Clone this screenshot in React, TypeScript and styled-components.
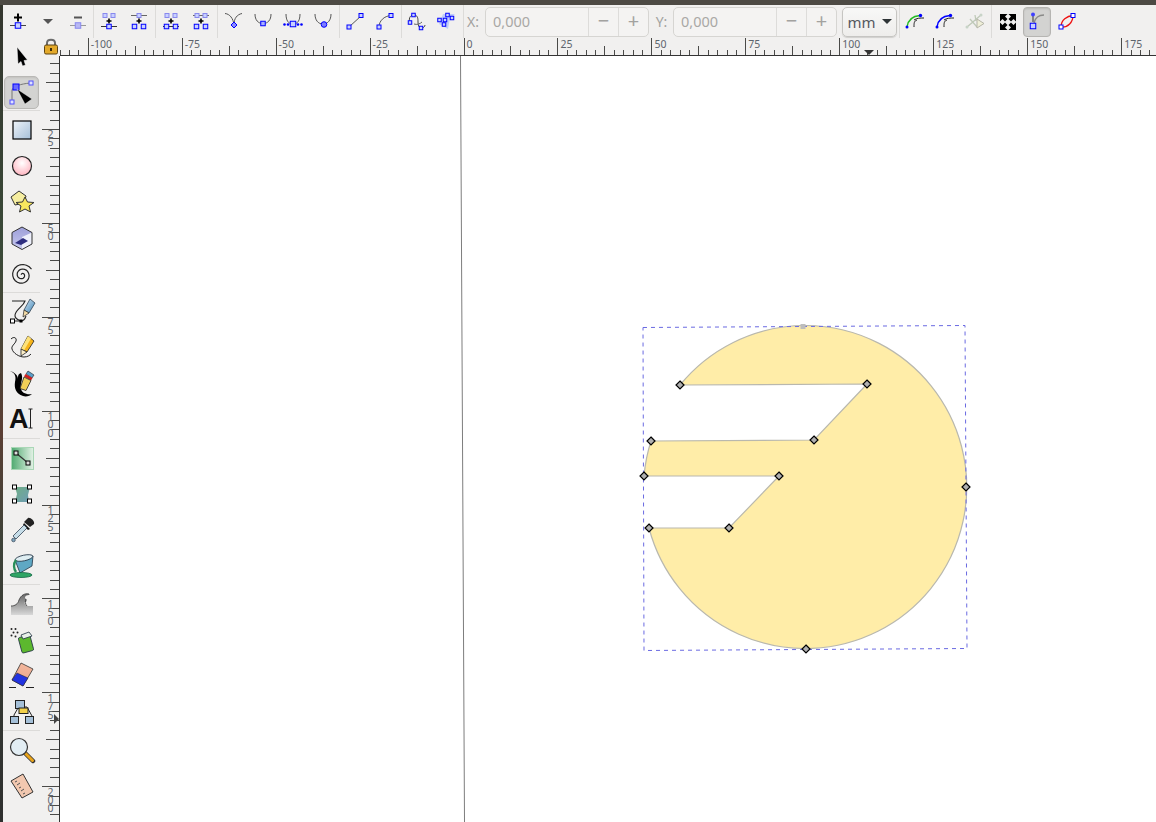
import React from "react";
import styled, { createGlobalStyle } from "styled-components";

const Global = createGlobalStyle`
  html, body { margin: 0; padding: 0; height: 100%; overflow: hidden; background: #f0efee; }
  #root { height: 100%; }
  * { box-sizing: border-box; }
`;

const Page = styled.div`
  width: 1156px;
  height: 822px;
  display: flex;
  flex-direction: column;
  font-family: "Noto Sans", "Open Sans", sans-serif;
  background: #f1f0ef;
  overflow: hidden;
`;
const TitleStrip = styled.div`
  height: 5px;
  flex: none;
  background: #4d4a44;
`;
const Body = styled.div`
  flex: 1;
  display: flex;
  min-height: 0;
`;
const DesktopEdge = styled.div`
  width: 3px;
  flex: none;
  background: linear-gradient(180deg, #34362e 0%, #3a4a38 30%, #5b3f34 52%, #3d4238 66%, #2e2f2e 100%);
`;
const Main = styled.div`
  flex: 1;
  display: flex;
  flex-direction: column;
  min-width: 0;
`;
const TopBar = styled.div`
  height: 33px;
  flex: none;
  display: flex;
  align-items: stretch;
`;
const Group = styled.div<{ $line?: boolean; $pl?: number; $pr?: number }>`
  display: flex;
  align-items: center;
  height: 33px;
  padding-left: ${(p) => p.$pl ?? 0}px;
  padding-right: ${(p) => p.$pr ?? 0}px;
  border-right: ${(p) => (p.$line ? "1px solid #dcdbd9" : "none")};
`;
const TopButton = styled.div<{ $active?: boolean; $w?: number }>`
  width: ${(p) => p.$w ?? 30}px;
  height: 30px;
  display: flex;
  align-items: center;
  justify-content: center;
  border-radius: 4px;
  ${(p) =>
    p.$active &&
    `background: #d3d3d1; border: 1px solid #b6b5b2; box-shadow: inset 0 1px 2px #bdbcb9; margin: 0 2px 0 0; flex: 0 0 28px;`}
`;
const FieldLabel = styled.span<{ $w: number }>`
  width: ${(p) => p.$w}px;
  font-size: 14px;
  color: #a3a29f;
  padding-left: 3px;
`;
const Spin = styled.div`
  width: 164px;
  height: 30px;
  display: flex;
  background: #f4f3f2;
  border: 1px solid #d6d5d2;
  border-radius: 5px;
`;
const SpinValue = styled.div`
  width: 102px;
  padding-left: 7px;
  font-size: 14.5px;
  line-height: 27px;
  color: #a9a8a5;
`;
const SpinStep = styled.div`
  width: 30px;
  border-left: 1px solid #dddcda;
  text-align: center;
  font-size: 20px;
  line-height: 25px;
  color: #a3a29f;
`;
const Unit = styled.div`
  width: 55px;
  height: 30px;
  margin-left: 5px;
  margin-right: 2px;
  display: flex;
  align-items: center;
  justify-content: center;
  gap: 6px;
  font-size: 15px;
  color: #56595e;
  border: 1px solid #c6c5c2;
  border-radius: 5px;
  background: linear-gradient(#f8f8f7, #eeedeb);
  box-shadow: 0 1px 1px #d0cfcc;
`;
const Caret = styled.span`
  width: 0;
  height: 0;
  border-left: 5px solid transparent;
  border-right: 5px solid transparent;
  border-top: 5px solid #2e3436;
`;
const Work = styled.div`
  flex: 1;
  display: flex;
  min-height: 0;
`;
const ToolColumn = styled.div`
  width: 37px;
  flex: none;
  display: flex;
  flex-direction: column;
  padding-top: 1px;
`;
const ToolButton = styled.div<{ $active?: boolean }>`
  width: 35px;
  height: ${(p) => (p.$active ? 33 : 36)}px;
  margin: ${(p) => (p.$active ? "1px 0 1px 1px" : "0 0 0 1px")};
  flex: none;
  display: flex;
  align-items: center;
  justify-content: center;
  border-radius: 5px;
  ${(p) =>
    p.$active &&
    `background: #d3d3d1; border: 1px solid #b9b8b5; box-shadow: inset 0 1px 2px #c2c1be;`}
`;
const ToolRule = styled.div`
  width: 37px;
  height: 1px;
  flex: none;
  margin-bottom: 1px;
  background: #dcdbd9;
`;
const Stage = styled.div`
  flex: 1;
  display: grid;
  grid-template-columns: 20px 1fr;
  grid-template-rows: 18px 1fr;
  min-width: 0;
`;
const Corner = styled.div`
  display: flex;
  justify-content: center;
  align-items: center;
  padding-left: 1px;
  padding-bottom: 1px;
`;
const RulerSvg = styled.svg`
  display: block;
`;
const Canvas = styled.div`
  background: #fff;
  overflow: hidden;
`;

const LONG = "#4a4a48";
const hTicks: React.ReactElement[] = [];
for (let k = -43; k <= 74; k++) {
  const x = Math.round(463.5 + k * 9.395) + 0.5;
  if (x < 60) continue;
  const kind = ((k % 10) + 10) % 10;
  const y1 = kind === 0 ? 38 : kind === 5 ? 46 : 50;
  hTicks.push(<line key={k} x1={x} x2={x} y1={y1} y2={55} stroke={LONG} />);
}
const hLabels = [-100, -75, -50, -25, 0, 25, 50, 75, 100, 125, 150, 175];

const vTicks: React.ReactElement[] = [];
for (let k = 3; k <= 83; k++) {
  const y = Math.round(35 + k * 9.39) + 0.5;
  const kind = k % 10;
  const x1 = kind === 0 ? 42 : kind === 5 ? 46 : 50;
  vTicks.push(<line key={k} x1={x1} x2={59} y1={y} y2={y} stroke={LONG} />);
}
const vLabels = ["25", "50", "75", "100", "125", "150", "175", "200"];

const HRuler = () => (
  <RulerSvg width={1096} height={18} viewBox="60 38 1096 18">
    {hTicks}
    <line x1={59} x2={1156} y1={55.5} y2={55.5} stroke="#333" />
    {hLabels.map((v, i) => (
      <text
        key={v}
        x={463.5 + (i - 4) * 93.95 + 3}
        y={48}
        fontSize={10.5}
        fontFamily="Noto Sans, sans-serif"
        fill="#5d646c"
      >
        {v}
      </text>
    ))}
    <polygon points="864,50 874,50 869,55" fill="#333" />
  </RulerSvg>
);

const VRuler = () => (
  <RulerSvg width={20} height={766} viewBox="40 56 20 766">
    {vTicks}
    <line x1={59.5} x2={59.5} y1={56} y2={822} stroke="#333" />
    {vLabels.map((v, i) => (
      <text key={v} fontSize={10.5} fontFamily="Noto Sans, sans-serif" fill="#5d646c">
        {v.split("").map((d, j) => (
          <tspan key={j} x={47.5} y={129 + i * 93.95 + 9 + j * 8.4}>
            {d}
          </tspan>
        ))}
      </text>
    ))}
    <polygon points="54,714 59,719 54,724" fill="#444" />
  </RulerSvg>
);

const BLUE = "#0000ff";

const Sq = ({ x, y, s = 5, f = "#c8d0ff", c = BLUE }: { x: number; y: number; s?: number; f?: string; c?: string }) => (
  <rect x={x - s / 2} y={y - s / 2} width={s} height={s} fill={f} stroke={c} strokeWidth={1} />
);
const Plus = ({ x, y, r = 2.5 }: { x: number; y: number; r?: number }) => (
  <path d={`M${x - r} ${y}H${x + r}M${x} ${y - r}V${y + r}`} stroke="#000" strokeWidth={1.6} fill="none" />
);

const Ico = ({ children, size = 26 }: { children: React.ReactNode; size?: number }) => (
  <svg width={size} height={size} viewBox={`0 0 ${size} ${size}`} style={{ overflow: "visible" }}>
    {children}
  </svg>
);

const NodeAdd = () => (
  <Ico>
    <path d="M13 4.500v8M9 8.500h8" stroke="#000" strokeWidth={2} />
    <path d="M5 16.500h16" stroke="#444" />
    <Sq x={13} y={16.5} s={5.500} />
  </Ico>
);
const Dropdown = () => (
  <svg width={12} height={8} viewBox="0 0 12 8">
    <polygon points="1,1 11,1 6,6" fill="#555" />
  </svg>
);
const NodeDel = () => (
  <Ico>
    <path d="M9 8.500h8" stroke="#555" strokeWidth={2} />
    <path d="M5 16.500h16" stroke="#999" />
    <Sq x={13} y={16.5} s={5.500} c="#8888ee" f="#b8b8f4" />
  </Ico>
);
const JoinA = () => (
  <Ico>
    <Sq x={9} y={6.5} s={4} c="#8888ee" />
    <Sq x={17} y={6.5} s={4} c="#8888ee" />
    <Plus x={13} y={12} />
    <path d="M5 17.500h16" stroke="#333" />
    <Sq x={13} y={17.5} s={4.500} />
  </Ico>
);
const JoinB = () => (
  <Ico>
    <path d="M5 6.500h16" stroke="#666" />
    <Sq x={13} y={6.5} s={4} c="#8888ee" />
    <Plus x={13} y={12} />
    <Sq x={8.500} y={17.5} s={4.500} />
    <Sq x={17.500} y={17.5} s={4.500} />
  </Ico>
);
const JoinC = () => (
  <Ico>
    <Sq x={9} y={6.5} s={4} c="#8888ee" />
    <Sq x={17} y={6.5} s={4} c="#8888ee" />
    <Plus x={13} y={12} />
    <path d="M5 17.500h16" stroke="#333" />
    <Sq x={8.500} y={17.5} s={4.500} />
    <Sq x={17.500} y={17.5} s={4.500} />
  </Ico>
);
const JoinD = () => (
  <Ico>
    <path d="M5 6.500h16" stroke="#666" />
    <Sq x={9} y={6.5} s={4} c="#8888ee" />
    <Sq x={17} y={6.5} s={4} c="#8888ee" />
    <Plus x={13} y={12} />
    <Sq x={8.500} y={17.5} s={4.500} />
    <Sq x={17.500} y={17.5} s={4.500} />
  </Ico>
);
const CURVE = "#555";
const Cusp = () => (
  <Ico>
    <path d="M5 4.500c5 .5 8 5 9 11M22 4.500c-5 1-8 5-8 11" stroke={CURVE} fill="none" />
    <path d="M14 13l3 3-3 3-3-3z" fill="#8a8aff" stroke={BLUE} />
  </Ico>
);
const Smooth = () => (
  <Ico>
    <path d="M5 5c0 6 3 9.500 8 9.500s8-3.500 8-9.500" stroke={CURVE} fill="none" />
    <Sq x={13} y={14.5} s={4.500} f="#a8b0ff" />
  </Ico>
);
const Symm = () => (
  <Ico>
    <path d="M6 5c0 6 2 10 7 10s7-4 7-10" stroke={CURVE} fill="none" />
    <Sq x={13} y={15} s={5.500} />
    <circle cx={4.500} cy={15.500} r={1.300} fill={BLUE} />
    <circle cx={8} cy={15.500} r={1.300} fill={BLUE} />
    <circle cx={18} cy={15.500} r={1.300} fill={BLUE} />
    <circle cx={21.500} cy={15.500} r={1.300} fill={BLUE} />
  </Ico>
);
const Auto = () => (
  <Ico>
    <path d="M5 5c0 6 3 10 8 10s8-4 8-10" stroke={CURVE} fill="none" />
    <circle cx={14} cy={15.500} r={2.800} fill="#7d7dff" stroke={BLUE} />
  </Ico>
);
const ToLine = () => (
  <Ico>
    <path d="M7 18L19 7" stroke={CURVE} />
    <Sq x={7} y={18} s={4} />
    <Sq x={19} y={6.5} s={4} />
  </Ico>
);
const ToCurve = () => (
  <Ico>
    <path d="M7 18C7 12 12 7 19 6.500" stroke={CURVE} fill="none" />
    <Sq x={7} y={18} s={4} />
    <Sq x={19} y={6.5} s={4} />
  </Ico>
);
const ObjPath = () => (
  <Ico>
    <path d="M6 13c-2-4 1-8 5-7 3 1 3 4 3 7s1 6 3 6 4-1 4-3" stroke="#444" fill="none" />
    <path d="M10 15c3 1 6 0 8-2" stroke="#666" fill="none" />
    <Sq x={9.500} y={6} s={3.500} />
    <Sq x={6} y={13.500} s={3.500} />
    <Sq x={17} y={19} s={3.500} />
  </Ico>
);
const StrokePath = () => (
  <Ico>
    <path d="M9 5h12L16 9 14 20 5 15z" fill="#a9bcff" opacity={0.7} />
    <Sq x={13.500} y={6} s={3.500} />
    <Sq x={18} y={9} s={3.500} />
    <Sq x={5.500} y={11} s={3.500} />
    <Sq x={11} y={11} s={3.500} />
    <Sq x={10} y={15.500} s={3.500} />
  </Ico>
);
const ClipEdit = () => (
  <Ico>
    <path d="M5 18C6 11 11 7 18 6.500" stroke="#22bb22" strokeWidth={1.500} fill="none" />
    <path d="M12 18c0-4 0-6 3-7M12 11c3-2 6-2 10-2" stroke="#222" fill="none" />
    <circle cx={5} cy={18} r={1.500} fill={BLUE} />
    <circle cx={18.500} cy={6.500} r={1.700} fill={BLUE} />
  </Ico>
);
const MaskEdit = () => (
  <Ico>
    <path d="M5 18C6 11 11 7 18 6.500" stroke={BLUE} strokeWidth={1.500} fill="none" />
    <path d="M12 18c0-4 0-6 3-7M12 11c3-2 6-2 10-2" stroke="#222" fill="none" />
    <circle cx={5} cy={18} r={1.500} fill={BLUE} />
    <circle cx={18.500} cy={6.500} r={1.700} fill={BLUE} />
  </Ico>
);
const LpeEdit = () => (
  <Ico>
    <path d="M5 18L19 6M8 10l7 8M13 6l1 6" stroke="#bfc9b8" strokeWidth={1.300} fill="none" />
    <path d="M15 10v9l7-4.500z" fill="#efefd8" stroke="#b5b5a8" />
    <circle cx={5} cy={18} r={1.500} fill="#c8d4c8" />
    <circle cx={19} cy={6} r={1.500} fill="#c8d4c8" />
  </Ico>
);
const Arrows = () => (
  <Ico>
    <g fill="#000">
      <path d="M5 5h7.500L10 7.500l2.500 2.500-2.500 2.500L7.500 10 5 12.500z" />
      <path d="M21 5v7.500L18.500 10 16 12.500 13.500 10 16 7.500 13.500 5z" />
      <path d="M5 21v-7.500L7.500 16 10 13.500 12.500 16 10 18.500 12.500 21z" />
      <path d="M21 21h-7.500l2.500-2.500-2.500-2.500 2.500-2.500 2.500 2.500 2.500-2.500z" />
    </g>
  </Ico>
);
const ShowHandles = () => (
  <Ico>
    <path d="M9 5v8" stroke="#333" />
    <path d="M10 14c1-5 5-8 10-8" stroke="#8a8a88" strokeWidth={1.500} fill="none" />
    <circle cx={9} cy={5.500} r={2} fill="#4040ff" />
    <Sq x={9} y={17} s={5.500} />
  </Ico>
);
const ShowOutline = () => (
  <Ico>
    <path d="M6 18C6 11 12 7 18 6.500" stroke="#ee1111" strokeWidth={1.300} fill="none" />
    <path d="M6 18c7 1 12-5 12-11.500" stroke="#ee1111" strokeWidth={1.300} fill="none" />
    <Sq x={6} y={18} s={4} f="#fff" />
    <Sq x={18} y={6.5} s={4} f="#fff" />
  </Ico>
);

const Grads = () => (
  <svg width={0} height={0} style={{ position: "absolute" }}>
    <defs>
      <linearGradient id="rectG" x1="0" y1="0" x2="1" y2="1">
        <stop offset="0" stopColor="#eef3f8" />
        <stop offset="1" stopColor="#a5bfd8" />
      </linearGradient>
      <radialGradient id="ballG" cx="0.5" cy="0.35" r="0.7">
        <stop offset="0" stopColor="#ffffff" />
        <stop offset="1" stopColor="#ffb0bc" />
      </radialGradient>
      <linearGradient id="waveG" x1="0" y1="0" x2="0" y2="1">
        <stop offset="0" stopColor="#666" />
        <stop offset="1" stopColor="#d8d8d8" />
      </linearGradient>
      <linearGradient id="greenG" x1="0" y1="0" x2="1" y2="0">
        <stop offset="0" stopColor="#4faa70" />
        <stop offset="1" stopColor="#e4f2e6" />
      </linearGradient>
      <linearGradient id="meshG" x1="0" y1="0" x2="1" y2="1">
        <stop offset="0" stopColor="#6fae86" />
        <stop offset="1" stopColor="#6f9cb5" />
      </linearGradient>
      <linearGradient id="eraserG" x1="0" y1="0" x2="0" y2="1">
        <stop offset="0" stopColor="#f3b79c" />
        <stop offset="1" stopColor="#e8a48c" />
      </linearGradient>
      <linearGradient id="penG" x1="0" y1="0" x2="1" y2="1">
        <stop offset="0" stopColor="#d5e6f2" />
        <stop offset="1" stopColor="#3f86b8" />
      </linearGradient>
      <linearGradient id="boxG" x1="0" y1="0" x2="0" y2="1">
        <stop offset="0" stopColor="#9c9ed8" />
        <stop offset="1" stopColor="#c8caf0" />
      </linearGradient>
    </defs>
  </svg>
);

const spiralPath = (() => {
  let d = "";
  for (let a = 0; a <= 15; a += 0.3) {
    const r = 0.6 + a * 0.72;
    const x = 13 + r * Math.cos(a + 3.6);
    const y = 14 + r * Math.sin(a + 3.6);
    d += (a === 0 ? "M" : "L") + x.toFixed(1) + " " + y.toFixed(1);
  }
  return d;
})();

const Selector = () => (
  <Ico>
    <path d="M8 3l10.500 13-3.500.5 1.500 4.500-3 1-1.500-4.500L9 20z" fill="#000" stroke="#fff" strokeWidth={0.500} />
  </Ico>
);
const NodeTool = () => (
  <Ico size={30}>
    <path d="M5 23V12C6 8 14 6 23 5" stroke="#777" fill="none" />
    <Sq x={9} y={9} s={6} f="#6a6aff" />
    <Sq x={24} y={5} s={4} f="#dfe2ff" c="#5050ff" />
    <Sq x={5} y={24} s={4} f="#dfe2ff" c="#5050ff" />
    <path d="M10 11l15 10-7 5z" fill="#000" stroke="#fff" strokeWidth={0.400} />
  </Ico>
);
const RectTool = () => (
  <Ico>
    <rect x={4} y={4} width={18} height={18} fill="url(#rectG)" stroke="#000" strokeWidth={1.200} />
  </Ico>
);
const EllipseTool = () => (
  <Ico>
    <circle cx={13} cy={13} r={9.500} fill="url(#ballG)" stroke="#222" strokeWidth={1.200} />
  </Ico>
);
const StarTool = () => (
  <Ico>
    <polygon points="10,2 17,7 15,14 6,16 2,8" fill="#f6eea0" stroke="#333" />
    <polygon points="16,8 18.500,13 25,13.500 20,17 21.500,23 16,20 10.500,23 12,17 7,13.500 13.500,13" fill="#f8e85e" stroke="#333" />
  </Ico>
);
const BoxTool = () => (
  <Ico>
    <polygon points="13,2 23,7.500 23,19 13,24.500 3,19 3,7.500" fill="url(#boxG)" />
    <polygon points="13,12 23,7.500 23,19 13,24.500" fill="#eef0fb" />
    <polygon points="6,18 14,13 19,16 12,20" fill="#2e2e80" />
    <polygon points="13,2 23,7.500 23,19 13,24.500 3,19 3,7.500" fill="none" stroke="#333" />
  </Ico>
);
const SpiralTool = () => (
  <Ico>
    <path d={spiralPath} fill="none" stroke="#222" strokeWidth={1.200} />
  </Ico>
);
const PenTool = () => (
  <Ico>
    <path d="M3 2h13c-2 6-9 8-10 14-.5 3 3 5 6 6 2 0 4-2 5-5" fill="none" stroke="#222" strokeWidth={1.100} />
    <path d="M3 22h9" stroke="#222" />
    <rect x={1.500} y={20} width={4} height={4} fill="#fff" stroke="#000" />
    <rect x={10.500} y={20.500} width={3} height={3} fill="#000" />
    <path d="M21 0l5 4-6 10-5-3z" fill="url(#penG)" stroke="#234" strokeWidth={0.700} />
    <path d="M15 11l5 3-6 4z" fill="#f0d9a6" stroke="#222" strokeWidth={0.700} />
  </Ico>
);
const PencilTool = () => (
  <Ico>
    <path d="M2 4c3-3 6-1 5 2-1 3-5 5-4 8 1 4 7 8 12 8 4 0 6-2 7-3" fill="none" stroke="#222" />
    <path d="M19 1l6 5-7 11-6-3z" fill="#f6b41a" stroke="#222" strokeWidth={0.800} />
    <path d="M19 1l3 2.500-7 12-3-1.500z" fill="#fde27a" />
    <path d="M12 14l6 3-6 4z" fill="#fbeec8" stroke="#222" strokeWidth={0.800} />
  </Ico>
);
const CalligTool = () => (
  <Ico>
    <path d="M1 0c6 2 6 7 5 11-1 6 1 12 8 14 3 1 7 0 9-2-5 1-11-1-11-6-1-6 3-9 0-15-3 1-3 3-3 6C9 4 5 1 1 0z" fill="#000" />
    <path d="M19 0l6 4-2 3-6-4z" fill="#5b9ec9" stroke="#222" strokeWidth={0.600} />
    <path d="M16.500 3l7 4-1.500 2.500-7-4z" fill="#d12020" />
    <path d="M15 6l7 3.500-5 10-6-2z" fill="#f1cf57" stroke="#222" strokeWidth={0.800} />
  </Ico>
);
const TextTool = () => (
  <Ico>
    <text x={0} y={21} fontFamily="Liberation Sans, sans-serif" fontWeight={700} fontSize={27} fill="#111">
      A
    </text>
    <path d="M19.500 2h4M21.500 2v19M19.500 21h4" stroke="#222" fill="none" />
  </Ico>
);
const GradTool = () => (
  <Ico>
    <rect x={2.500} y={2.500} width={22} height={22} fill="url(#greenG)" stroke="#a9d7b6" />
    <path d="M7 8l12 10" stroke="#333" strokeWidth={1.200} />
    <rect x={5} y={6} width={4} height={4} fill="#ddd" stroke="#000" />
    <rect x={17} y={16} width={4} height={4} fill="#ddd" stroke="#000" />
  </Ico>
);
const MeshTool = () => (
  <Ico>
    <polygon points="6,6 21,6 19,14 20,21 6,21 8,13" fill="url(#meshG)" />
    <rect x={3.500} y={4} width={4} height={4} fill="#fff" stroke="#000" />
    <rect x={18.500} y={4} width={4} height={4} fill="#fff" stroke="#000" />
    <rect x={3.500} y={18} width={4} height={4} fill="#fff" stroke="#000" />
    <rect x={18.500} y={18} width={4} height={4} fill="#fff" stroke="#000" />
  </Ico>
);
const DropperTool = () => (
  <Ico>
    <path d="M15 6l6 6-2 1-5-5z" fill="#111" />
    <path d="M19 1c2-1 7 3 6 6l-4 3-6-5z" fill="#222" />
    <path d="M15 8l3 3-11 11-3-3z" fill="#c6dde8" stroke="#345" strokeWidth={0.800} />
    <circle cx={4.500} cy={23} r={1.800} fill="#7fa5bd" stroke="#345" strokeWidth={0.700} />
  </Ico>
);
const BucketTool = () => (
  <Ico>
    <path d="M6 7l18-4-1 10-12 7z" fill="#5fa8c4" stroke="#234" strokeWidth={0.800} />
    <ellipse cx={15} cy={5} rx={9} ry={2.800} transform="rotate(-12 15 5)" fill="#dfeef2" stroke="#234" strokeWidth={0.800} />
    <path d="M7 7C4 11 5 16 7 19" stroke="#2a8f5a" strokeWidth={2.500} fill="none" />
    <ellipse cx={12} cy={22} rx={11} ry={2.500} fill="#2fa565" stroke="#164" strokeWidth={0.800} />
  </Ico>
);
const TweakTool = () => (
  <Ico>
    <path d="M2 24V15c4 0 7-2 8-6 2-5 6-7 10-6 1 .2 1 1 0 1-4 0-5 3-3 4 2 2 0 3-1 3s0 3 2 4h6v9z" fill="url(#waveG)" />
    <path d="M2 15c4 0 7-2 8-6 2-5 6-7 10-6M17 8c-1 2-1 5 1 7" fill="none" stroke="#333" strokeWidth={0.800} />
  </Ico>
);
const SprayTool = () => (
  <Ico>
    <rect x={11} y={9} width={12} height={16} rx={1.500} transform="rotate(-15 17 17)" fill="#5cb82e" stroke="#234" strokeWidth={0.800} />
    <path d="M12 8l8-3 3 4-9 3z" fill="#e8f0e8" stroke="#234" strokeWidth={0.800} />
    <g fill="#222">
      <circle cx={2.500} cy={2} r={1} />
      <circle cx={6.500} cy={2} r={1} />
      <circle cx={4.500} cy={5.500} r={1} />
      <circle cx={8.500} cy={5.500} r={1} />
      <circle cx={2.500} cy={8.500} r={1} />
      <circle cx={6.500} cy={9.500} r={1} />
    </g>
  </Ico>
);
const EraserTool = () => (
  <Ico>
    <polygon points="12,0 24,6 14,23 3,17" fill="url(#eraserG)" stroke="#333" strokeWidth={0.800} />
    <polygon points="8,10 19,15 14,23 3,17" fill="#2233e0" stroke="#222" strokeWidth={0.500} />
    <path d="M0 24.500h7M17 24.500h8" stroke="#222" strokeWidth={1.200} />
  </Ico>
);
const ConnTool = () => (
  <Ico>
    <path d="M9 9L5 16v2M15 8h3l5 9" fill="none" stroke="#222" />
    <rect x={6.500} y={1.500} width={9} height={8} fill="#a5c0d8" stroke="#222" />
    <rect x={10} y={9} width={9} height={5.500} fill="#f3d14a" stroke="#222" />
    <rect x={1.500} y={17.500} width={8} height={7} fill="#a5c0d8" stroke="#222" />
    <rect x={16.500} y={17.500} width={8} height={7} fill="#a5c0d8" stroke="#222" />
  </Ico>
);
const ZoomTool = () => (
  <Ico>
    <path d="M15 15l9 9" stroke="#333" strokeWidth={4.500} strokeLinecap="round" />
    <path d="M16.500 16.500l7 7" stroke="#e8a41c" strokeWidth={3} strokeLinecap="round" />
    <circle cx={10} cy={10} r={8.500} fill="#e2edf3" stroke="#333" strokeWidth={1.200} />
  </Ico>
);
const MeasureTool = () => (
  <Ico>
    <polygon points="2,8 14,1 24,19 13,25" fill="#f2c8b0" stroke="#333" />
    <path d="M6 9l2-1M8 12l3-2M10 15l2-1M12 18l3-2M14 21l2-1" stroke="#555" fill="none" />
  </Ico>
);
const Lock = () => (
  <svg width={16} height={17} viewBox="0 0 16 17">
    <path d="M4 8V5c0-4.500 8-4.500 8 0v3" fill="none" stroke="#6b6b6b" strokeWidth={2} />
    <rect x={1.500} y={7} width={13} height={9} rx={1.500} fill="#e3a92a" stroke="#5e4412" />
    <rect x={7} y={10} width={2} height={3} fill="#3c2a08" />
  </svg>
);

const Drawing = () => {
  const nodes = [
    [680, 385],
    [867, 384],
    [814, 440],
    [651, 441],
    [644, 476],
    [779, 476],
    [729, 528],
    [649, 528],
    [966, 487],
    [806, 649],
  ];
  return (
    <svg width={1096} height={766} viewBox="60 56 1096 766" style={{ display: "block" }}>
      <line x1={460.5} y1={56} x2={464.5} y2={822} stroke="#7d7d7d" />
      <path
        d="M680 385A161.500 161.500 0 1 1 649 528L729 528L779 476L644 476A161.500 161.500 0 0 1 651 441L814 440L867 384Z"
        fill="#ffeda8"
        stroke="#b9b8ae"
        strokeWidth={1.200}
      />
      <polygon
        points="643,327.500 965,325.500 967,648.500 644,650.500"
        fill="none"
        stroke="#6a6ae2"
        strokeDasharray="4 4"
      />
      <rect x={800.5} y={324} width={5} height={5} fill="#bdbdbd" />
      {nodes.map(([x, y]) => (
        <path
          key={x + "-" + y}
          d={`M${x} ${y - 4}L${x + 4} ${y}L${x} ${y + 4}L${x - 4} ${y}Z`}
          fill="#b0b0b0"
          stroke="#000"
          strokeWidth={1.200}
        />
      ))}
    </svg>
  );
};

export default function App() {
  return (
    <Page>
      <Global />
      <Grads />
      <TitleStrip />
      <Body>
        <DesktopEdge />
        <Main>
          <TopBar>
            <Group $line>
              <TopButton><NodeAdd /></TopButton>
              <TopButton><Dropdown /></TopButton>
              <TopButton><NodeDel /></TopButton>
            </Group>
            <Group $line $pr={1}>
              <TopButton><JoinA /></TopButton>
              <TopButton><JoinB /></TopButton>
            </Group>
            <Group $line $pr={1}>
              <TopButton><JoinC /></TopButton>
              <TopButton><JoinD /></TopButton>
            </Group>
            <Group $line $pr={1}>
              <TopButton><Cusp /></TopButton>
              <TopButton><Smooth /></TopButton>
              <TopButton><Symm /></TopButton>
              <TopButton><Auto /></TopButton>
            </Group>
            <Group $line $pr={1}>
              <TopButton><ToLine /></TopButton>
              <TopButton><ToCurve /></TopButton>
            </Group>
            <Group $line $pr={1}>
              <TopButton><ObjPath /></TopButton>
              <TopButton><StrokePath /></TopButton>
            </Group>
            <Group>
              <FieldLabel $w={21}>X:</FieldLabel>
              <Spin>
                <SpinValue>0,000</SpinValue>
                <SpinStep>−</SpinStep>
                <SpinStep>+</SpinStep>
              </Spin>
              <FieldLabel $w={24}>&nbsp;Y:</FieldLabel>
              <Spin>
                <SpinValue>0,000</SpinValue>
                <SpinStep>−</SpinStep>
                <SpinStep>+</SpinStep>
              </Spin>
            </Group>
            <Group $line>
              <Unit>
                mm <Caret />
              </Unit>
            </Group>
            <Group $line $pr={1}>
              <TopButton><ClipEdit /></TopButton>
              <TopButton><MaskEdit /></TopButton>
              <TopButton><LpeEdit /></TopButton>
            </Group>
            <Group $pl={1}>
              <TopButton><Arrows /></TopButton>
              <TopButton $active><ShowHandles /></TopButton>
              <TopButton><ShowOutline /></TopButton>
            </Group>
          </TopBar>
          <Work>
            <ToolColumn>
              <ToolButton><Selector /></ToolButton>
              <ToolButton $active><NodeTool /></ToolButton>
              <ToolRule />
              <ToolButton><RectTool /></ToolButton>
              <ToolButton><EllipseTool /></ToolButton>
              <ToolButton><StarTool /></ToolButton>
              <ToolButton><BoxTool /></ToolButton>
              <ToolButton><SpiralTool /></ToolButton>
              <ToolRule />
              <ToolButton><PenTool /></ToolButton>
              <ToolButton><PencilTool /></ToolButton>
              <ToolButton><CalligTool /></ToolButton>
              <ToolButton><TextTool /></ToolButton>
              <ToolRule />
              <ToolButton><GradTool /></ToolButton>
              <ToolButton><MeshTool /></ToolButton>
              <ToolButton><DropperTool /></ToolButton>
              <ToolButton><BucketTool /></ToolButton>
              <ToolRule />
              <ToolButton><TweakTool /></ToolButton>
              <ToolButton><SprayTool /></ToolButton>
              <ToolButton><EraserTool /></ToolButton>
              <ToolButton><ConnTool /></ToolButton>
              <ToolRule />
              <ToolButton><ZoomTool /></ToolButton>
              <ToolButton><MeasureTool /></ToolButton>
            </ToolColumn>
            <Stage>
              <Corner><Lock /></Corner>
              <HRuler />
              <VRuler />
              <Canvas><Drawing /></Canvas>
            </Stage>
          </Work>
        </Main>
      </Body>
    </Page>
  );
}
